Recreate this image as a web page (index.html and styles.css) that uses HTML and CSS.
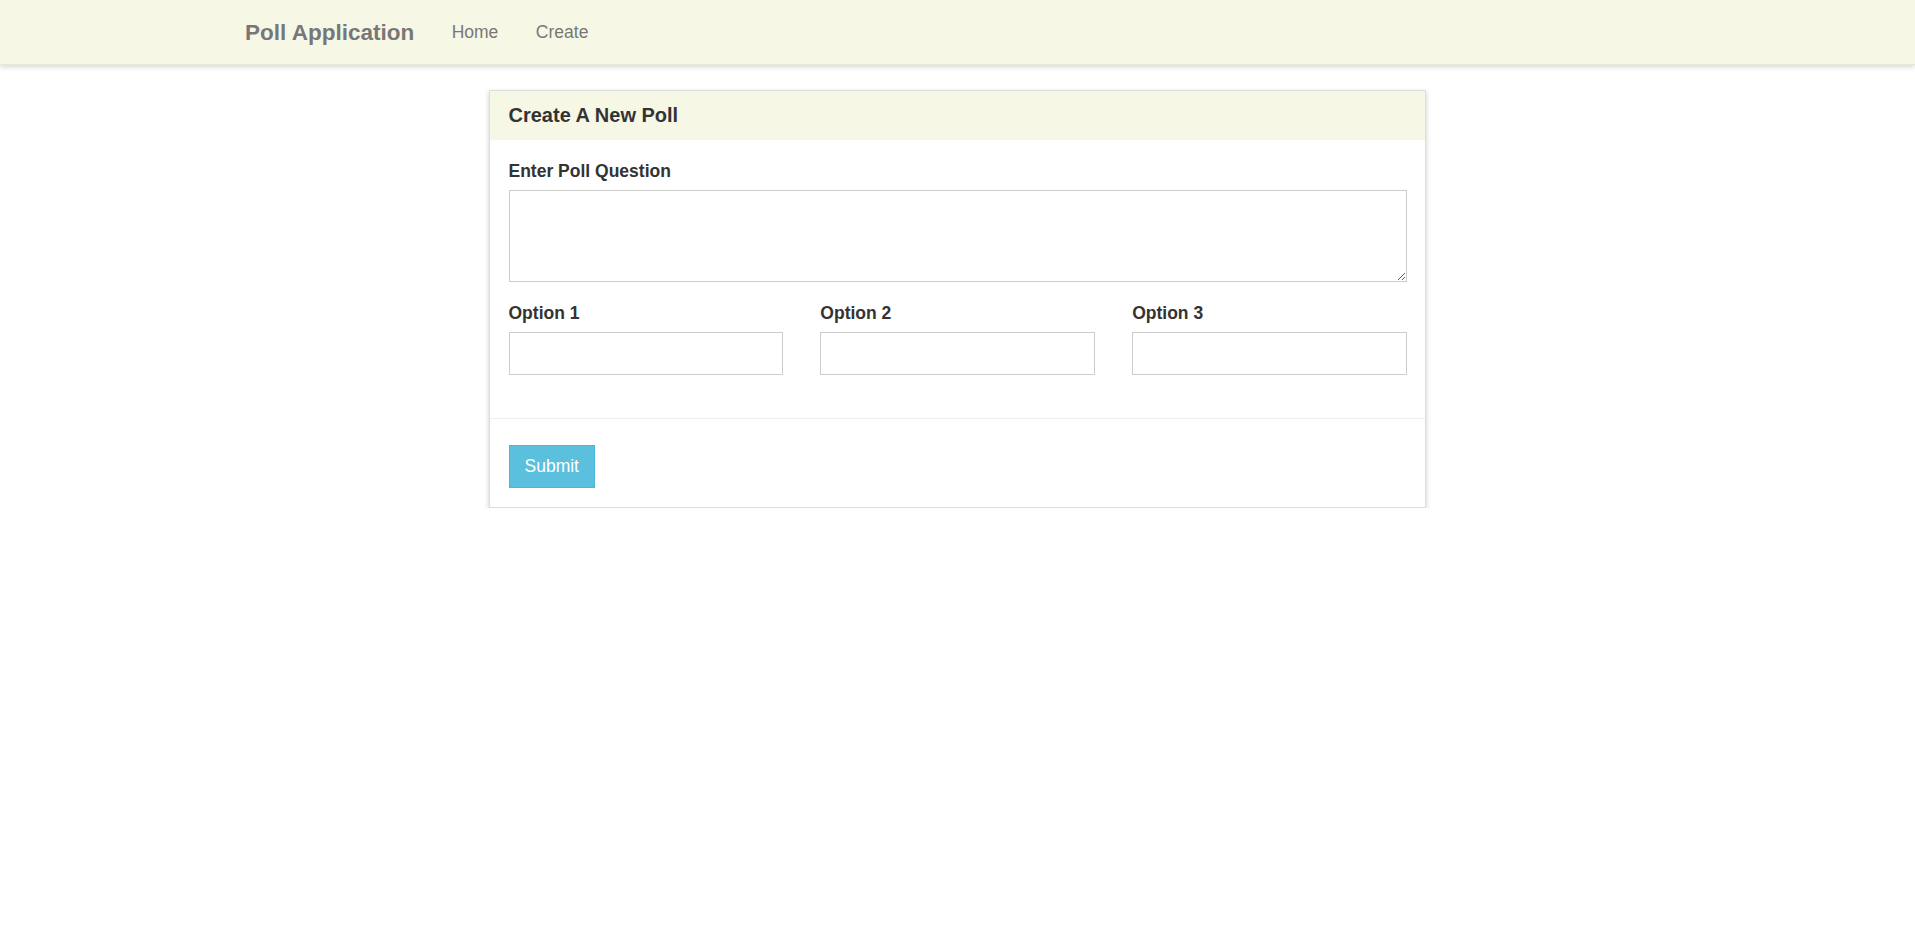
FILE: index.html
```html
<!DOCTYPE html>
<html lang="en">
<head>
<meta charset="utf-8">
<title>Poll Application</title>
<link rel="stylesheet" href="styles.css">
</head>
<body>
<nav class="navbar">
  <div class="nav-inner">
    <a class="brand" href="#">Poll Application</a>
    <ul class="nav-links">
      <li><a href="#">Home</a></li>
      <li><a href="#">Create</a></li>
    </ul>
  </div>
</nav>
<main class="page">
  <section class="card">
    <div class="card-head">
      <h3 class="card-title">Create A New Poll</h3>
    </div>
    <form class="card-body">
      <div class="field">
        <label class="field-label">Enter Poll Question</label>
        <textarea class="control control-area" rows="3"></textarea>
      </div>
      <div class="options">
        <div class="field">
          <label class="field-label">Option 1</label>
          <input class="control" type="text">
        </div>
        <div class="field">
          <label class="field-label">Option 2</label>
          <input class="control" type="text">
        </div>
        <div class="field">
          <label class="field-label">Option 3</label>
          <input class="control" type="text">
        </div>
      </div>
    </form>
    <div class="card-foot">
      <button class="btn-submit" type="button">Submit</button>
    </div>
  </section>
</main>
</body>
</html>
```
FILE: styles.css
```css
* { box-sizing: border-box; }

html, body {
  margin: 0;
  padding: 0;
  background: #ffffff;
  font-family: "Liberation Sans", Arial, Helvetica, sans-serif;
  font-size: 17.5px;
  line-height: 25px;
  color: #333333;
}

.navbar {
  height: 65px;
  background: #f7f7e6;
  border-bottom: 1px solid #e8e8d6;
  box-shadow: 0 2px 5px rgba(0, 0, 0, 0.16);
}

.nav-inner {
  width: 1462.5px;
  margin: 0 auto;
  padding: 0 18.75px;
  display: flex;
  align-items: center;
  height: 64px;
}

.brand {
  font-size: 22.5px;
  font-weight: bold;
  color: #777777;
  text-decoration: none;
  line-height: 25px;
  padding-right: 18.75px;
}

.nav-links {
  list-style: none;
  margin: 0;
  padding: 0;
  display: flex;
}

.nav-links a {
  display: block;
  padding: 0 18.75px;
  color: #777777;
  text-decoration: none;
  font-size: 17.5px;
  line-height: 25px;
}

.page {
  width: 937.5px;
  margin: 25px auto 0;
}

.card {
  border: 1px solid #dddddd;
  background: #ffffff;
  box-shadow: 0 2px 5px rgba(0, 0, 0, 0.2);
}

.card-head {
  background: #f7f7e6;
  padding: 12.5px 18.75px 13px;
  height: 49px;
}

.card-title {
  margin: 0;
  font-size: 20px;
  line-height: 22px;
  font-weight: bold;
  color: #333333;
}

.card-body {
  margin: 0;
  padding: 18.75px 18.75px 25px;
  display: flex;
  flex-direction: column;
  gap: 18.75px;
}

.field {
  display: flex;
  flex-direction: column;
}

.field-label {
  font-weight: bold;
  font-size: 17.5px;
  line-height: 25px;
  margin-bottom: 6.25px;
  color: #333333;
}

.control {
  display: block;
  width: 100%;
  height: 42.5px;
  padding: 7.5px 15px;
  font-family: inherit;
  font-size: 17.5px;
  line-height: 25px;
  color: #555555;
  background: #ffffff;
  border: 1px solid #cccccc;
  border-radius: 0;
  margin: 0;
}

.control-area {
  height: 92px;
}

.options {
  display: grid;
  grid-template-columns: repeat(3, 1fr);
  column-gap: 37.5px;
  padding-bottom: 18.75px;
}

.card-foot {
  border-top: 1px solid #eeeeee;
  padding: 26px 18.75px 18.75px;
}

.btn-submit {
  display: block;
  height: 42.5px;
  padding: 7.5px 15px;
  font-family: inherit;
  font-size: 17.5px;
  line-height: 25px;
  color: #ffffff;
  background: #5bc0de;
  border: 1px solid #46b8da;
  border-radius: 0;
  cursor: pointer;
}
```
